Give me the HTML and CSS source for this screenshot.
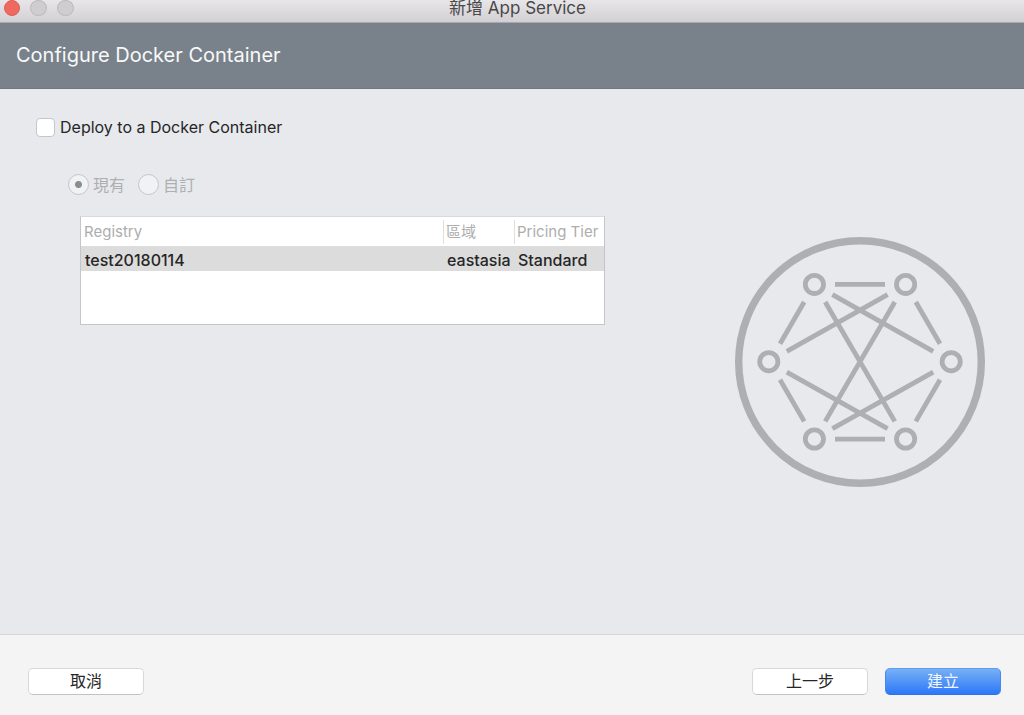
FILE: index.html
```html
<!DOCTYPE html>
<html lang="zh-Hant">
<head>
<meta charset="utf-8">
<title>新增 App Service</title>
<link rel="stylesheet" href="styles.css">
</head>
<body>
<header class="titlebar">
  <div class="lights">
    <button class="light light-close" type="button" aria-label="Close"></button>
    <button class="light" type="button" aria-label="Minimize" disabled></button>
    <button class="light" type="button" aria-label="Zoom" disabled></button>
  </div>
  <div class="window-title">新增 App Service</div>
</header>
<div class="banner"><h1>Configure Docker Container</h1></div>
<main class="content">
  <form class="settings">
    <label class="deploy"><input class="check" type="checkbox">Deploy to a Docker Container</label>
    <div class="source">
      <label class="option"><input class="radio" type="radio" name="source" checked disabled>現有</label>
      <label class="option"><input class="radio" type="radio" name="source" disabled>自訂</label>
    </div>
    <div class="registries">
      <table>
        <colgroup><col><col class="col-region"><col class="col-tier"></colgroup>
        <thead><tr><th>Registry</th><th>區域</th><th>Pricing Tier</th></tr></thead>
        <tbody><tr><td>test20180114</td><td>eastasia</td><td>Standard</td></tr></tbody>
      </table>
    </div>
  </form>
  <svg class="network" viewBox="-125 -125 250 250" fill="none" stroke="#aeafb2" aria-hidden="true">
    <circle r="121.3" stroke-width="7.4"/>
    <g stroke-width="4.8">
      <circle cx="-45.6" cy="-77.6" r="9.1"/><circle cx="45.6" cy="-77.6" r="9.1"/>
      <circle cx="-91.2" cy="-.3" r="9.1"/><circle cx="91.2" cy="-.3" r="9.1"/>
      <circle cx="-45.6" cy="77" r="9.1"/><circle cx="45.6" cy="77" r="9.1"/>
    </g>
    <path stroke-width="4.8" transform="translate(0 -.3)" d="M-25-77.4H25M-25 77.4H25M-55.8-59.7-80-18M55.8-59.7 80-18M-55.8 59.7-80 18M55.8 59.7 80 18M-27.6-67 73.2-10.4M27.6-67-73.2-10.4M-27.6 67 73.2 10.4M27.6 67-73.2 10.4M-34.8-59.7 34.8 59.7M34.8-59.7-34.8 59.7"/>
  </svg>
</main>
<footer class="actions">
  <button class="btn btn-cancel" type="button">取消</button>
  <button class="btn" type="button">上一步</button>
  <button class="btn btn-primary" type="button">建立</button>
</footer>
</body>
</html>
```

FILE: styles.css
```css
* { box-sizing: border-box; }

body {
  margin: 0;
  min-height: 100vh;
  display: flex;
  flex-direction: column;
  background: #e7e9ed;
  color: #262627;
  font: 16px/20px Inter, "Noto Sans CJK TC", sans-serif;
}

button, input { font: inherit; margin: 0; }

.titlebar {
  display: grid;
  grid-template-columns: 1fr auto 1fr;
  height: 23px;
  padding-left: 11px;
  background: linear-gradient(#e8e6e8, #d2d0d2);
  border-bottom: 1px solid #aaa8ac;
}

.lights {
  display: flex;
  gap: 10px;
  margin-left: -7px;
}

.light {
  width: 17px;
  height: 16px;
  padding: 0;
  border: 1px solid #bcbbbd;
  border-radius: 50%;
  background: #cfcdcf;
}

.light-close {
  width: 16px;
  border-color: #df5c53;
  background: #ee695f;
}

.window-title {
  color: #48474a;
  font-size: 17px;
  line-height: 17px;
}

.banner {
  padding: 20px 16px;
  background: #79828a;
  border-bottom: 1px solid #707981;
}

h1 {
  margin: 0;
  color: #f8f9fa;
  font-size: 20px;
  font-weight: 400;
  line-height: 25px;
}

.content {
  flex: 1;
  display: flex;
  align-items: center;
  justify-content: space-between;
  padding: 0 39px 0 36px;
}

.settings {
  align-self: flex-start;
  padding-top: 28px;
}

.deploy, .option {
  display: flex;
  align-items: center;
}

.deploy { gap: 5px; }

.option { gap: 4px; color: #aeafb2; }

.check {
  appearance: none;
  width: 19px;
  height: 19px;
  border: 1px solid #c5c6c9;
  border-radius: 4px;
  background: #fff;
}

.source {
  display: flex;
  gap: 13px;
  margin: 37px 0 0 32px;
}

.radio {
  appearance: none;
  width: 21px;
  height: 21px;
  border: 1px solid #c5c6c9;
  border-radius: 50%;
  background: #f1f2f4;
}

.radio:checked {
  background: radial-gradient(circle, #8c8d8f 3px, #f1f2f4 4px);
}

.registries {
  width: 525px;
  min-height: 109px;
  margin: 21px 0 0 44px;
  border: 1px solid #c3c5c8;
  border-top-color: #d9dadd;
  background: #fff;
}

table {
  width: 100%;
  table-layout: fixed;
  border-collapse: collapse;
  text-align: left;
}

.col-region { width: 71px; }
.col-tier { width: 90px; }

th {
  height: 29px;
  padding: 0 3px;
  color: #adadae;
  font-size: 15px;
  font-weight: 400;
}

th + th {
  background: linear-gradient(#dededf, #dededf) left center / 1px 24px no-repeat;
}

td {
  height: 25px;
  padding: 2px 4px 0;
  background: #dcdcdc;
  font-weight: 500;
}

th, td { white-space: nowrap; }

.network {
  flex: none;
  width: 250px;
  height: 250px;
}

.actions {
  display: flex;
  gap: 17px;
  padding: 33px 23px 20px 28px;
  border-top: 1px solid #d5d7d8;
  background: #f4f4f4;
}

.btn {
  width: 116px;
  height: 27px;
  padding: 0 0 2px;
  border: 1px solid #d8d8d8;
  border-bottom-color: #c2c2c2;
  border-radius: 5px;
  background: #fff;
  color: #262627;
}

.btn-cancel { margin-right: auto; }

.btn-primary {
  border-color: #5b9df0 #4489f0 #2f72ea;
  background: linear-gradient(#77b0f5, #2d78f8);
  color: #f2f7fe;
}
```
